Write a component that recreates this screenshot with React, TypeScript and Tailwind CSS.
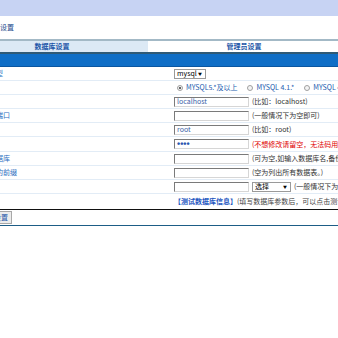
const font = "font-['Noto_Sans_CJK_SC','Noto_Sans',sans-serif]";

function Input({ value, password }: { value?: string; password?: boolean }) {
	return (
		<div className="w-[75px] h-[10px] shrink-0 border border-t-[#7a7a7a] border-l-[#7a7a7a] border-b-[#d6d6d6] border-r-[#d6d6d6] bg-white flex items-center px-[2px] text-[7px] leading-none text-[#3a62a8]">
			{password ? <span className="font-['Liberation_Sans',sans-serif] text-[9px] font-bold text-[#2a56b0]">••••</span> : value}
		</div>
	);
}

function Select({ value, width }: { value: string; width: string }) {
	return (
		<div className={`${width} h-[10px] shrink-0 border border-[#9a9a9a] bg-white flex items-center justify-between pl-[2px] pr-[3px] text-[7px] leading-none text-black`}>
			<span>{value}</span>
			<span className="text-[4px]">▼</span>
		</div>
	);
}

function Radio({ checked, label }: { checked?: boolean; label: string }) {
	return (
		<div className="flex items-center gap-[3px]">
			<span className="w-[6px] h-[6px] rounded-full border border-[#a0a0a0] bg-[#f4f4f4] flex items-center justify-center">
				{checked && <span className="w-[2px] h-[2px] rounded-full bg-[#333]" />}
			</span>
			<span className="text-[#2560b0]">{label}</span>
		</div>
	);
}

function Row({ label, children, tall }: { label?: string; children: React.ReactNode; tall?: boolean }) {
	return (
		<div className={`flex items-center border-b border-[#e2ecf6] ${tall ? "h-[15px]" : "h-[14px]"}`}>
			<div className="w-[218px] shrink-0 pl-[19px] text-[#2a6cc0] whitespace-nowrap">{label}</div>
			<div className="flex items-center gap-[3px] whitespace-nowrap">{children}</div>
		</div>
	);
}

export default function App() {
	return (
		<div className={`w-[338px] h-[338px] overflow-hidden bg-white ${font} text-[7px] leading-none`}>
			<div className="ml-[-44px] w-[440px]">
				<div className="h-[16px] bg-[#c7d3f3]" />
				<div className="h-[23px] flex items-center pl-[30px] text-[#1b4a8c]">安装设置</div>
				<div className="h-[2px] bg-[#a3b9c6]" />
				<div className="flex h-[11px] items-center font-bold text-[#1d56a8]">
					<div className="w-[192px] h-full bg-[#dce9f5] flex items-center justify-center">数据库设置</div>
					<div className="w-[192px] h-full flex items-center justify-center">管理员设置</div>
				</div>
				<div className="h-[2px] bg-[#2f5a76]" />
				<div className="h-[13px] bg-[#0f6ec6] border-b border-[#0a56a0]" />

				<Row label="数据类型">
					<Select value="mysql" width="w-[32px]" />
				</Row>
				<Row>
					<div className="flex items-center gap-[10px] pl-[3px]">
						<Radio checked label="MYSQL5.*及以上" />
						<Radio label="MYSQL 4.1.*" />
						<Radio label="MYSQL 4.0.*" />
					</div>
				</Row>
				<Row>
					<Input value="localhost" />
					<span className="text-[#333]">(比如：localhost)</span>
				</Row>
				<Row label="数据库端口">
					<Input />
					<span className="text-[#333]">(一般情况下为空即可)</span>
				</Row>
				<Row>
					<Input value="root" />
					<span className="text-[#333]">(比如：root)</span>
				</Row>
				<Row tall>
					<Input password />
					<span className="text-[#e00000]">(不想修改请留空，无法码用"root"时请填写)</span>
				</Row>
				<Row label="选择数据库">
					<Input />
					<span className="text-[#333]">(可为空,如输入数据库名,备份直接导入该库)</span>
				</Row>
				<Row label="数据表的前缀">
					<Input />
					<span className="text-[#333]">(空为列出所有数据表。)</span>
				</Row>
				<Row>
					<Input />
					<Select value="选择" width="w-[39px]" />
					<span className="text-[#333]">(一般情况下为空即可)</span>
				</Row>
				<div className="flex items-center h-[15px]">
					<div className="w-[218px] shrink-0" />
					<span className="font-bold text-[#1d56c0] whitespace-nowrap">【测试数据库信息】</span>
					<span className="text-[#444] whitespace-nowrap">(填写数据库参数后，可以点击测试上面的信息是否正确)</span>
				</div>
				<div className="h-[1px] bg-[#111]" />
				<div className="h-[15px] flex items-center pl-[20px]">
					<button className="h-[13px] px-[3px] border border-[#a8a8a8] bg-[#ececec] text-[#1d56a8] text-[7px] leading-none">保存设置</button>
				</div>
				<div className="h-[1px] bg-[#1d5d86]" />
			</div>
		</div>
	);
}
